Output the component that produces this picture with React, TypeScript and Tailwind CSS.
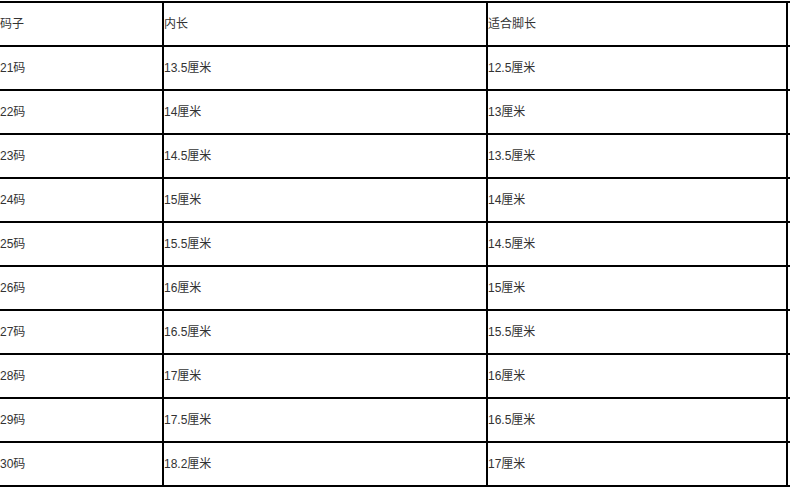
import React from 'react';

const rows: [string, string, string][] = [
  ['21码', '13.5厘米', '12.5厘米'],
  ['22码', '14厘米', '13厘米'],
  ['23码', '14.5厘米', '13.5厘米'],
  ['24码', '15厘米', '14厘米'],
  ['25码', '15.5厘米', '14.5厘米'],
  ['26码', '16厘米', '15厘米'],
  ['27码', '16.5厘米', '15.5厘米'],
  ['28码', '17厘米', '16厘米'],
  ['29码', '17.5厘米', '16.5厘米'],
  ['30码', '18.2厘米', '17厘米'],
];

const Row = ({ cells, first }: { cells: [string, string, string]; first?: boolean }) => (
  <div className={`flex h-[44px] border-b-2 border-black ${first ? 'h-[46px] border-t-2' : ''}`}>
    <div className="w-[164px] flex items-center border-r-2 border-black">{cells[0]}</div>
    <div className="w-[324px] flex items-center border-r-2 border-black">{cells[1]}</div>
    <div className="w-[300px] flex items-center border-r-2 border-black">{cells[2]}</div>
  </div>
);

export default function App() {
  return (
    <div
      className="w-[790px] h-[488px] bg-white pt-[1px] text-[12px] text-[#333]"
      style={{ fontFamily: '"Liberation Sans", "Noto Sans CJK SC", sans-serif' }}
    >
      <Row cells={['码子', '内长', '适合脚长']} first />
      {rows.map((r) => (
        <Row key={r[0]} cells={r} />
      ))}
    </div>
  );
}
